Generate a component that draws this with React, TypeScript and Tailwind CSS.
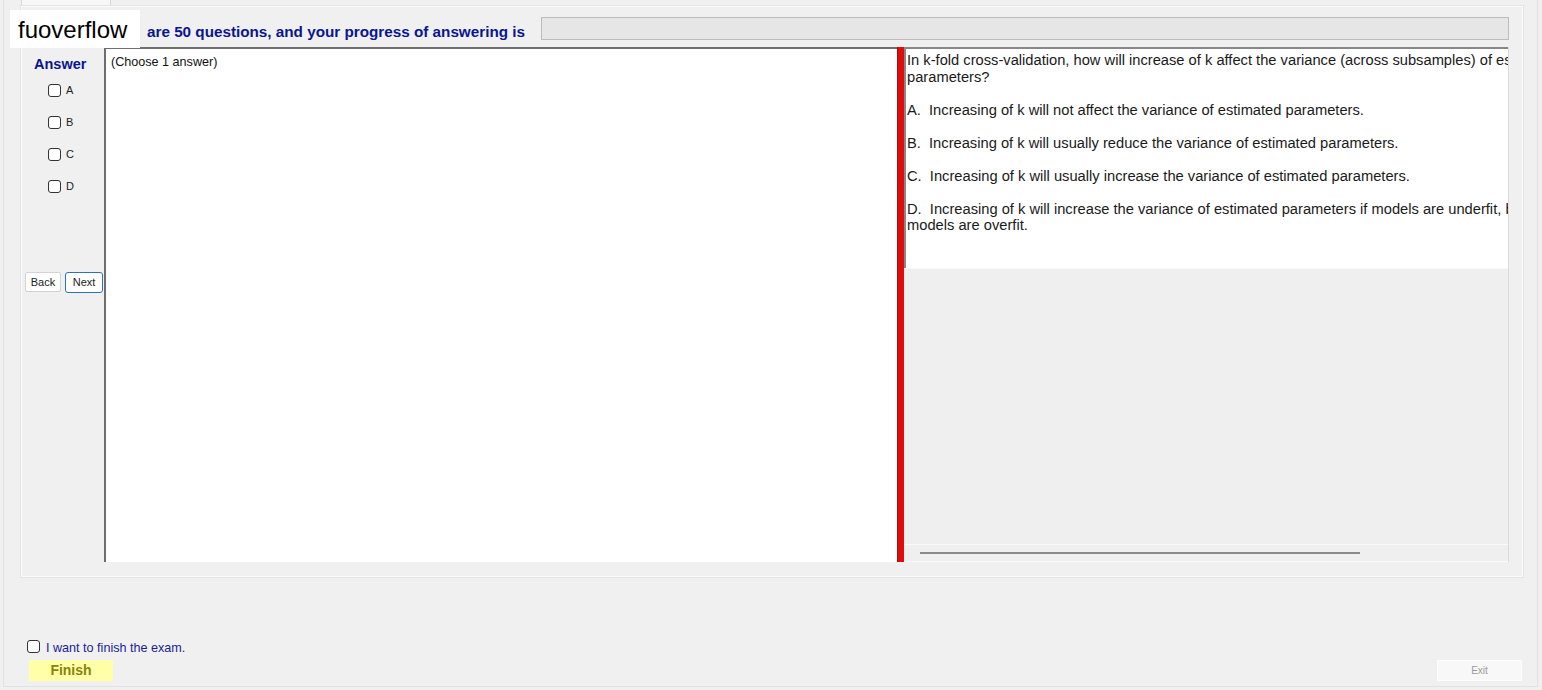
import React from "react";

const Box = () => (
  <span className="inline-block w-[13px] h-[13px] border border-[#333] rounded-[3px] bg-white shrink-0" />
);

export default function App() {
  const font = { fontFamily: '"Liberation Sans", Arial, sans-serif' };
  return (
    <div className="w-[1542px] h-[690px] bg-[#f0f0f0] overflow-hidden relative" style={font}>
      <div className="ml-[3px] w-[1535px] h-[687px] border-l border-r border-b border-[#e2e2e2] flex flex-col">
        {/* tab strip */}
        <div className="h-[6px] flex">
          <div className="ml-[17px] w-[90px] h-[6px] border-l border-r border-[#d8d8d8] bg-[#f7f7f7]" />
        </div>
        {/* main panel */}
        <div className="ml-[17px] w-[1502px] h-[571px] border border-[#fafafa] outline outline-[#e4e4e4] flex flex-col pl-[3px]">
          {/* header */}
          <div className="h-[40px] flex items-center">
            <div className="w-[120px]" />
            <span className="text-[15.25px] font-bold text-[#0b1590] ml-[2px] mt-[10px] whitespace-nowrap">
              are 50 questions, and your progress of answering is
            </span>
            <div className="ml-[16px] mt-[3px] w-[968px] h-[23px] bg-[#e6e6e6] border border-[#bcbcbc]" />
          </div>
          {/* content */}
          <div className="flex h-[515px]">
            {/* answer column */}
            <div className="w-[79px] flex flex-col">
              <div className="text-[14.5px] font-bold text-[#0b1590] pl-[9px] pt-[7px] h-[35px]">Answer</div>
              <div className="flex flex-col pl-[23px] gap-[19px] mt-[2px]">
                {["A", "B", "C", "D"].map((l) => (
                  <div key={l} className="flex items-center gap-[5px] h-[13px]">
                    <Box />
                    <span className="text-[11px] text-[#222]">{l}</span>
                  </div>
                ))}
              </div>
              <div className="flex gap-[4px] mt-[79px]">
                <div className="w-[36px] h-[20px] bg-white border border-[#d4d4d4] rounded-[2px] text-[11px] text-[#222] flex items-center justify-center">
                  Back
                </div>
                <div className="w-[38px] h-[21px] bg-white border border-[#2a73b8] rounded-[3px] text-[11px] text-[#222] flex items-center justify-center">
                  Next
                </div>
              </div>
            </div>
            {/* text area */}
            <div className="w-[793px] bg-white border-l-2 border-t-2 border-[#6e6e6e] pl-[5px] pt-[4px]">
              <div className="text-[12.6px] text-[#111]">(Choose 1 answer)</div>
            </div>
            {/* splitter */}
            <div className="w-[7px] bg-[#e00b0b] border-l border-[#9a1010]" />
            {/* right panel */}
            <div className="w-[605px] flex flex-col border-r border-[#dcdcdc]">
              <div className="h-[221px] bg-white border-t-2 border-l-2 border-[#888] overflow-hidden pl-[1px] pt-[3px] text-[14.7px] leading-[16.5px] text-[#1a1a1a]">
                <div className="whitespace-nowrap">
                  In k-fold cross-validation, how will increase of k affect the variance (across subsamples) of estimated
                </div>
                <div className="whitespace-nowrap">parameters?</div>
                <div className="whitespace-nowrap mt-[16.5px]">A.&nbsp; Increasing of k will not affect the variance of estimated parameters.</div>
                <div className="whitespace-nowrap mt-[16.5px]">B.&nbsp; Increasing of k will usually reduce the variance of estimated parameters.</div>
                <div className="whitespace-nowrap mt-[16.5px]">C.&nbsp; Increasing of k will usually increase the variance of estimated parameters.</div>
                <div className="whitespace-nowrap mt-[16.5px]">
                  D.&nbsp; Increasing of k will increase the variance of estimated parameters if models are underfit, but reduce it if
                </div>
                <div className="whitespace-nowrap">models are overfit.</div>
              </div>
              <div className="flex-1 bg-[#efefef] border-t border-[#f8f8f8] flex flex-col justify-end">
                <div className="h-[18px] border-t border-[#fafafa] border-b flex items-center pl-[16px]">
                  <div className="w-[440px] h-[2px] bg-[#8a8a8a]" />
                </div>
              </div>
            </div>
          </div>
        </div>
        {/* bottom */}
        <div className="flex-1 flex flex-col justify-end pb-[5px]">
          <div className="flex items-center gap-[6px] pl-[23px] mb-[2px]">
            <Box />
            <span className="text-[12.6px] text-[#1b1b9a] mt-[4px]">I want to finish the exam.</span>
          </div>
          <div className="flex justify-between pl-[25px] pr-[15px]">
            <div className="w-[84px] h-[21px] bg-[#ffffa8] text-[14px] font-bold text-[#85850a] flex items-center justify-center">
              Finish
            </div>
            <div className="w-[85px] h-[21px] bg-[#f8f8f8] border border-[#fdfdfd] text-[10px] text-[#9a9a9a] flex items-center justify-center">
              Exit
            </div>
          </div>
        </div>
      </div>
      {/* watermark */}
      <div className="absolute left-[10px] top-[10px] w-[130px] h-[38px] bg-white pl-[8px] pt-[6px] text-[24px] leading-[28px] text-black">
        fuoverflow
      </div>
    </div>
  );
}
